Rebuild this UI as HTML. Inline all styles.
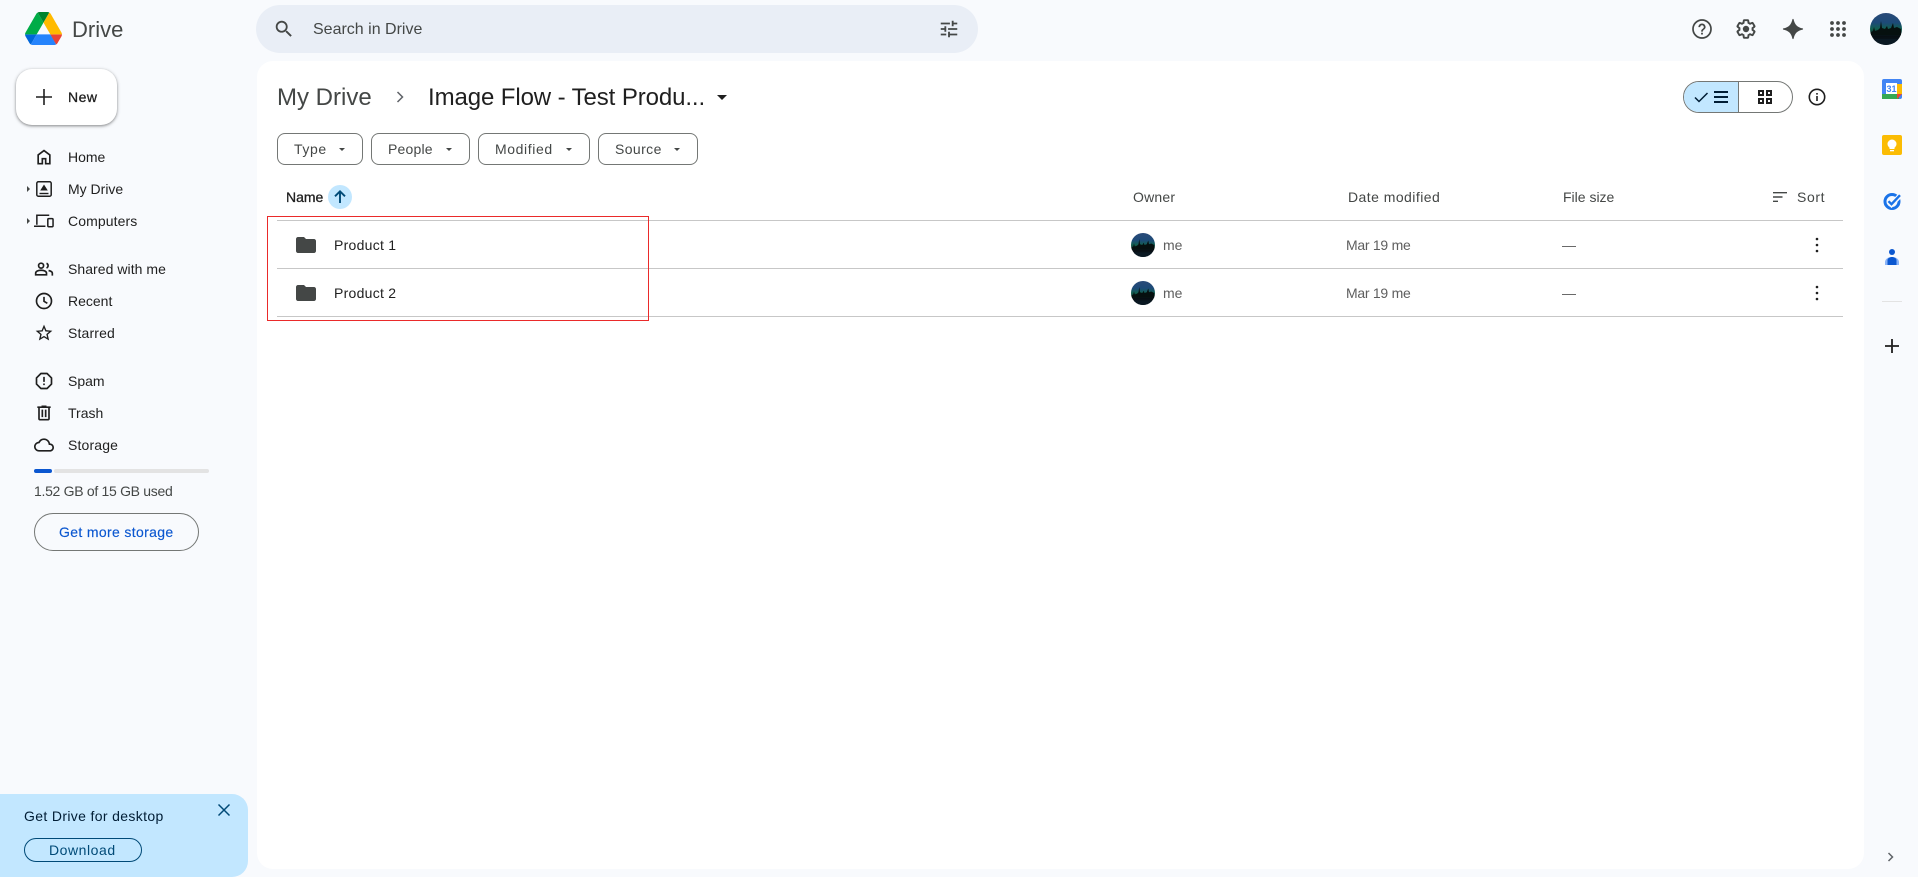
<!DOCTYPE html>
<html lang="en"><head><meta charset="utf-8"><title>Image Flow - Test Product - Google Drive</title>
<style>
html,body{margin:0;padding:0;width:1918px;height:877px;overflow:hidden;background:#f8fafd;font-family:"Liberation Sans",sans-serif;color:#1f1f1f}
.a{position:absolute}
.t{position:absolute;white-space:nowrap;font-size:14px;line-height:20px;height:20px}
.n{color:#1f1f1f;left:68px}
.m{-webkit-text-stroke:.3px currentColor}
svg{position:absolute;display:block;overflow:visible}
.chip{position:absolute;top:133px;height:30px;border:1px solid #747775;border-radius:8px;box-sizing:content-box}
.chip span{position:absolute;left:16px;top:5px;font-size:14px;line-height:20px;color:#444746;white-space:nowrap}
.chip i{position:absolute;top:14px;width:0;height:0;border:3.5px solid transparent;border-top:3.5px solid #444746;border-bottom:0}
.line{position:absolute;left:277px;width:1566px;height:1px;background:#c7c7c7}
.g{color:#5e5e5e}
.d{letter-spacing:-.27px}
</style></head><body>
<svg width="0" height="0" style="position:absolute"><defs>
<linearGradient id="sky" x1="0" y1="0" x2="0" y2="1"><stop offset="0" stop-color="#2a4a78"/><stop offset=".3" stop-color="#1d4a78"/><stop offset=".5" stop-color="#12604f"/><stop offset=".62" stop-color="#0a2a28"/><stop offset=".72" stop-color="#070d12"/><stop offset="1" stop-color="#0c1c26"/></linearGradient>
<clipPath id="cc"><circle cx="16" cy="16" r="16"/></clipPath>
<symbol id="av" viewBox="0 0 32 32"><g clip-path="url(#cc)"><rect width="32" height="32" fill="url(#sky)"/><path d="M0 20l3-2 1-4 1 4 3-1 2-2 1-7 1 7 3 1 2-3 1 3 3-1 2-5 1 5 3-1 4 2v6H0z" fill="#06100f"/><rect y="26" width="32" height="6" fill="#0a1822"/></g></symbol>
</defs></svg>

<!-- logo -->
<svg style="left:25px;top:12px" width="37" height="33" viewBox="0 0 87.3 78"><path d="m6.6 66.85 3.85 6.65c.8 1.4 1.95 2.5 3.3 3.3l13.75-23.8h-27.5c0 1.55.4 3.1 1.2 4.5z" fill="#0066da"/><path d="m43.65 25-13.75-23.8c-1.35.8-2.5 1.9-3.3 3.3l-25.4 44a9.06 9.06 0 0 0 -1.2 4.5h27.5z" fill="#00ac47"/><path d="m73.55 76.8c1.35-.8 2.5-1.9 3.3-3.3l1.6-2.75 7.65-13.25c.8-1.4 1.2-2.95 1.2-4.5h-27.502l5.852 11.5z" fill="#ea4335"/><path d="m43.65 25 13.75-23.8c-1.35-.8-2.9-1.2-4.5-1.2h-18.5c-1.6 0-3.15.45-4.5 1.2z" fill="#00832d"/><path d="m59.8 53h-32.3l-13.75 23.8c1.35.8 2.9 1.2 4.5 1.2h50.8c1.6 0 3.15-.45 4.5-1.2z" fill="#2684fc"/><path d="m73.4 26.5-12.7-22c-.8-1.4-1.95-2.5-3.3-3.3l-13.75 23.8 16.15 28h27.45c0-1.55-.4-3.1-1.2-4.5z" fill="#ffba00"/></svg>
<div class="t" style="left:72px;top:15px;height:30px;line-height:30px;font-size:22px;color:#444746">Drive</div>

<!-- search -->
<div class="a" style="left:256px;top:5px;width:722px;height:48px;border-radius:24px;background:#e9eef6"></div>
<svg style="left:273px;top:18px" width="22" height="22" viewBox="0 0 24 24" fill="#444746"><path d="M15.5 14h-.79l-.28-.27C15.41 12.59 16 11.11 16 9.5 16 5.91 13.09 3 9.5 3S3 5.91 3 9.5 5.91 16 9.5 16c1.61 0 3.09-.59 4.23-1.57l.27.28v.79l5 4.99L20.49 19l-4.99-5zm-6 0C7.01 14 5 11.99 5 9.5S7.01 5 9.5 5 14 7.01 14 9.5 11.99 14 9.5 14z"/></svg>
<div class="t" style="left:313px;top:20px;font-size:16px;color:#444746">Search in Drive</div>
<svg style="left:938px;top:18px" width="22" height="22" viewBox="0 0 24 24" fill="#444746"><path d="M3 17v2h6v-2H3zM3 5v2h10V5H3zm10 16v-2h8v-2h-8v-2h-2v6h2zM7 9v2H3v2h4v2h2V9H7zm14 4v-2H11v2h10zm-6-4h2V7h4V5h-4V3h-2v6z"/></svg>

<!-- top right -->
<svg style="left:1690px;top:17px" width="24" height="24" viewBox="0 0 24 24" fill="#444746"><circle cx="12" cy="12" r="9" fill="none" stroke="#444746" stroke-width="1.7"/><path d="M11.1 17.5h1.8v-1.8h-1.8zM12 6.5c-2 0-3.6 1.6-3.6 3.6h1.8c0-1 .8-1.8 1.8-1.8s1.8.8 1.8 1.8c0 1.8-2.7 1.6-2.7 4.5h1.8c0-2 2.7-2.3 2.7-4.5 0-2-1.6-3.6-3.6-3.6z"/></svg>
<svg style="left:1734px;top:17px" width="24" height="24" viewBox="0 0 24 24"><g transform="translate(12 12) scale(.88) translate(-12 -12)"><path fill="none" stroke="#444746" stroke-width="2.2" d="M19.43 12.98c.04-.32.07-.64.07-.98s-.03-.66-.07-.98l2.11-1.65c.19-.15.24-.42.12-.64l-2-3.46c-.12-.22-.39-.3-.61-.22l-2.49 1c-.52-.4-1.08-.73-1.69-.98l-.38-2.65C14.46 2.18 14.25 2 14 2h-4c-.25 0-.46.18-.49.42l-.38 2.65c-.61.25-1.17.59-1.69.98l-2.49-1c-.23-.09-.49 0-.61.22l-2 3.46c-.13.22-.07.49.12.64l2.11 1.65c-.04.32-.07.65-.07.98s.03.66.07.98l-2.11 1.65c-.19.15-.24.42-.12.64l2 3.46c.12.22.39.3.61.22l2.49-1c.52.4 1.08.73 1.69.98l.38 2.65c.03.24.24.42.49.42h4c.25 0 .46-.18.49-.42l.38-2.65c.61-.25 1.17-.59 1.69-.98l2.49 1c.23.09.49 0 .61-.22l2-3.46c.12-.22.07-.49-.12-.64z"/></g><circle cx="12" cy="12" r="3.2" fill="#444746"/></svg>
<svg style="left:1781px;top:17px" width="24" height="24" viewBox="0 0 24 24"><path fill="#444746" d="M12 2.5C13.2 8 16 10.8 21.5 12 16 13.2 13.2 16 12 21.5 10.8 16 8 13.2 2.5 12 8 10.8 10.8 8 12 2.5z" stroke="#444746" stroke-width="1.2" stroke-linejoin="round"/></svg>
<svg style="left:1826px;top:17px" width="24" height="24" viewBox="0 0 24 24" fill="#444746"><circle cx="6" cy="6" r="1.9"/><circle cx="12" cy="6" r="1.9"/><circle cx="18" cy="6" r="1.9"/><circle cx="6" cy="12" r="1.9"/><circle cx="12" cy="12" r="1.9"/><circle cx="18" cy="12" r="1.9"/><circle cx="6" cy="18" r="1.9"/><circle cx="12" cy="18" r="1.9"/><circle cx="18" cy="18" r="1.9"/></svg>
<svg style="left:1870px;top:13px" width="32" height="32"><use href="#av"/></svg>

<!-- new button -->
<div class="a" style="left:16px;top:69px;width:101px;height:56px;border-radius:16px;background:#fff;box-shadow:0 1px 2px rgba(0,0,0,.3),0 1px 3px 1px rgba(0,0,0,.15)"></div>
<svg style="left:32px;top:85px" width="24" height="24" viewBox="0 0 24 24"><path d="M12 4v16M4 12h16" stroke="#1f1f1f" stroke-width="1.6" fill="none"/></svg>
<div class="t m" style="left:68px;top:87px;letter-spacing:.5px">New</div>

<!-- nav -->
<svg style="left:34px;top:147px" width="20" height="20" viewBox="0 0 24 24" fill="#1f1f1f"><path d="M6 19h3v-6h6v6h3v-9l-6-4.5L6 10v9zm-2 2V9l8-6 8 6v12h-7v-6h-2v6H4z"/></svg>
<div class="t n" style="top:147px">Home</div>
<svg style="left:25px;top:186px" width="6" height="6" viewBox="0 0 6 6"><path d="M2 0l3 3-3 3z" fill="#444746"/></svg>
<svg style="left:36px;top:181px" width="16" height="16" viewBox="0 0 16 16"><rect x=".8" y=".8" width="14.4" height="14.4" rx="1.5" fill="none" stroke="#1f1f1f" stroke-width="1.5"/><path d="M8 3.5l3.8 6H4.2z" fill="#1f1f1f"/><path d="M3.5 12.5h9" stroke="#1f1f1f" stroke-width="1.4"/></svg>
<div class="t n" style="top:179px">My Drive</div>
<svg style="left:25px;top:218px" width="6" height="6" viewBox="0 0 6 6"><path d="M2 0l3 3-3 3z" fill="#444746"/></svg>
<svg style="left:34px;top:214px" width="20" height="14" viewBox="0 0 21 14" fill="none" stroke="#1f1f1f" stroke-width="1.6"><path d="M3 11V1h13M0 12.5h12"/><rect x="14.5" y="4.5" width="5.5" height="8.5" rx="1"/></svg>
<div class="t n" style="top:211px;letter-spacing:.1px">Computers</div>
<svg style="left:34px;top:259px" width="20" height="20" viewBox="0 0 24 24" fill="none" stroke="#1f1f1f" stroke-width="2"><circle cx="8.5" cy="8" r="3"/><path d="M2 19v-2c0-2.200 3-3.500 6.500-3.500S15 14.800 15 17v2z"/><path d="M15 5.200a3 3 0 0 1 0 5.600M17.500 13.800c2.200.5 4.500 1.500 4.500 3.200v3"/></svg>
<div class="t n" style="top:259px;letter-spacing:.05px">Shared with me</div>
<svg style="left:34px;top:291px" width="20" height="20" viewBox="0 0 24 24" fill="none" stroke="#1f1f1f" stroke-width="2"><circle cx="12" cy="12" r="9"/><path d="M12 7v5.400l4 2.400"/></svg>
<div class="t n" style="top:291px">Recent</div>
<svg style="left:34px;top:323px" width="20" height="20" viewBox="0 0 24 24" fill="#1f1f1f"><path d="M22 9.240l-7.190-.62L12 2 9.190 8.630 2 9.240l5.460 4.730L5.820 21 12 17.270 18.180 21l-1.630-7.030L22 9.240zM12 15.400l-3.760 2.270 1-4.280-3.320-2.880 4.380-.38L12 6.100l1.710 4.040 4.380.38-3.320 2.880 1 4.280L12 15.400z"/></svg>
<div class="t n" style="top:323px;letter-spacing:.15px">Starred</div>
<svg style="left:34px;top:371px" width="20" height="20" viewBox="0 0 24 24"><path d="M8.3 3h7.4L21 8.3v7.4L15.7 21H8.3L3 15.7V8.3z" fill="none" stroke="#1f1f1f" stroke-width="2" stroke-linejoin="round"/><path d="M11 7h2v6h-2zM11 15h2v2h-2z" fill="#1f1f1f"/></svg>
<div class="t n" style="top:371px">Spam</div>
<svg style="left:34px;top:403px" width="20" height="20" viewBox="0 0 24 24" fill="#1f1f1f"><path d="M15 4V3H9v1H4v2h1v13c0 1.1.9 2 2 2h10c1.1 0 2-.9 2-2V6h1V4h-5zm2 15H7V6h10v13zM9 8h2v9H9zm4 0h2v9h-2z"/></svg>
<div class="t n" style="top:403px">Trash</div>
<svg style="left:34px;top:435px" width="20" height="20" viewBox="0 0 24 24" fill="#1f1f1f"><path d="M12 6c2.620 0 4.880 1.860 5.390 4.430l.3 1.500 1.530.11c1.560.1 2.780 1.410 2.780 2.960 0 1.650-1.350 3-3 3H6c-2.210 0-4-1.790-4-4 0-2.050 1.530-3.760 3.560-3.970l1.070-.11.5-.95C8.080 7.140 9.940 6 12 6m0-2C9.110 4 6.600 5.640 5.350 8.040 2.340 8.360 0 10.910 0 14c0 3.310 2.690 6 6 6h13c2.760 0 5-2.240 5-5 0-2.640-2.050-4.780-4.650-4.960C18.670 6.590 15.640 4 12 4z"/></svg>
<div class="t n" style="top:435px;letter-spacing:.15px">Storage</div>
<div class="a" style="left:34px;top:469px;width:18px;height:4px;border-radius:2px;background:#0b57d0"></div>
<div class="a" style="left:54px;top:469px;width:155px;height:4px;border-radius:2px;background:#e3e3e3"></div>
<div class="t" style="left:34px;top:481px;color:#444746;letter-spacing:-.3px">1.52 GB of 15 GB used</div>
<div class="a" style="left:34px;top:513px;width:163px;height:36px;border:1px solid #747775;border-radius:19px"></div>
<div class="t m" style="left:59px;top:522px;color:#0b57d0;letter-spacing:.35px;-webkit-text-stroke-width:.15px">Get more storage</div>

<!-- banner -->
<div class="a" style="left:0;top:794px;width:248px;height:83px;border-radius:0 16px 16px 0;background:#c2e7ff"></div>
<div class="t" style="left:24px;top:806px;color:#001d35;letter-spacing:.35px">Get Drive for desktop</div>
<svg style="left:216px;top:802px" width="16" height="16" viewBox="0 0 16 16"><path d="M2.500 2.500l11 11M13.500 2.500l-11 11" stroke="#004a77" stroke-width="1.500"/></svg>
<div class="a" style="left:24px;top:838px;width:116px;height:22px;border:1px solid #004a77;border-radius:12px"></div>
<div class="t" style="left:49px;top:840px;color:#004a77;letter-spacing:.55px">Download</div>

<!-- main card -->
<div class="a" style="left:257px;top:61px;width:1607px;height:808px;background:#fff;border-radius:16px"></div>

<div class="t" style="left:277px;top:83px;height:30px;line-height:30px;font-size:24px;color:#444746">My Drive</div>
<svg style="left:388px;top:85px" width="24" height="24" viewBox="0 0 24 24"><path d="M9.500 7L14.500 12l-5 5" fill="none" stroke="#5f6368" stroke-width="1.500"/></svg>
<div class="t" style="left:428px;top:83px;height:30px;line-height:30px;font-size:24px;color:#1f1f1f;letter-spacing:-.1px">Image Flow - Test Produ...</div>
<div class="a" style="left:717px;top:95px;width:0;height:0;border:5px solid transparent;border-top:5px solid #1f1f1f;border-bottom:0"></div>

<!-- view toggle -->
<div class="a" style="left:1683px;top:81px;width:108px;height:30px;border:1px solid #747775;border-radius:16px;overflow:hidden"><div style="position:absolute;left:0;top:0;width:54px;height:30px;background:#c2e7ff;border-right:1px solid #747775"></div></div>
<svg style="left:1693px;top:89px" width="40" height="16" viewBox="0 0 40 16" fill="none" stroke="#001d35"><path d="M2 8.500l4 4L14.500 4" stroke-width="1.500"/><path d="M21 3h14M21 8h14M21 13h14" stroke-width="2"/></svg>
<svg style="left:1758px;top:90px" width="14" height="14" viewBox="0 0 14 14" fill="none" stroke="#1f1f1f" stroke-width="2"><rect x="1" y="1" width="4" height="4"/><rect x="9" y="1" width="4" height="4"/><rect x="1" y="9" width="4" height="4"/><rect x="9" y="9" width="4" height="4"/></svg>
<svg style="left:1805px;top:85px" width="24" height="24" viewBox="0 0 24 24"><circle cx="12" cy="12" r="7.700" fill="none" stroke="#1f1f1f" stroke-width="1.600"/><path d="M11.200 11h1.600v5h-1.600zM11.200 8h1.600v1.600h-1.600z" fill="#1f1f1f"/></svg>

<!-- chips -->
<div class="chip" style="left:277px;width:84px"><span style="letter-spacing:.6px">Type</span><i style="left:61px"></i></div>
<div class="chip" style="left:371px;width:97px"><span style="letter-spacing:.2px">People</span><i style="left:74px"></i></div>
<div class="chip" style="left:478px;width:110px"><span style="letter-spacing:.6px">Modified</span><i style="left:87px"></i></div>
<div class="chip" style="left:598px;width:98px"><span style="letter-spacing:.4px">Source</span><i style="left:75px"></i></div>

<!-- table header -->
<div class="t m" style="left:286px;top:187px">Name</div>
<div class="a" style="left:328px;top:185px;width:24px;height:24px;border-radius:50%;background:#c2e7ff"></div>
<svg style="left:331px;top:188px" width="18" height="18" viewBox="0 0 18 18"><path d="M9 15V3.500M4 8.300L9 3.300l5 5" fill="none" stroke="#004a77" stroke-width="1.900"/></svg>
<div class="t" style="left:1133px;top:187px;color:#444746;letter-spacing:.2px">Owner</div>
<div class="t" style="left:1348px;top:187px;color:#444746;letter-spacing:.45px">Date modified</div>
<div class="t" style="left:1563px;top:187px;color:#444746">File size</div>
<svg style="left:1772px;top:189px" width="16" height="16" viewBox="0 0 16 16" fill="#444746"><path d="M1 3h14v1.400H1zM1 7.300h9.500v1.400H1zM1 11.600h5V13H1z"/></svg>
<div class="t" style="left:1797px;top:187px;color:#444746;letter-spacing:.6px">Sort</div>
<div class="line" style="top:220px"></div>
<div class="line" style="top:268px"></div>
<div class="line" style="top:316px"></div>

<!-- row 1 -->
<svg style="left:294px;top:233px" width="24" height="24" viewBox="0 0 24 24"><path fill="#444746" d="M10 4H4c-1.100 0-2 .9-2 2v12c0 1.100.9 2 2 2h16c1.100 0 2-.9 2-2V8c0-1.100-.9-2-2-2h-8l-2-2z"/></svg>
<div class="t" style="left:334px;top:235px;letter-spacing:.27px">Product 1</div>
<svg style="left:1131px;top:233px" width="24" height="24"><use href="#av" width="24" height="24"/></svg>
<div class="t g" style="left:1163px;top:235px">me</div>
<div class="t g d" style="left:1346px;top:235px">Mar 19 me</div>
<div class="t g" style="left:1562px;top:235px">—</div>
<svg style="left:1807px;top:235px" width="20" height="20" viewBox="0 0 20 20" fill="#1f1f1f"><circle cx="10" cy="4" r="1.300"/><circle cx="10" cy="10" r="1.300"/><circle cx="10" cy="16" r="1.300"/></svg>

<!-- row 2 -->
<svg style="left:294px;top:281px" width="24" height="24" viewBox="0 0 24 24"><path fill="#444746" d="M10 4H4c-1.100 0-2 .9-2 2v12c0 1.100.9 2 2 2h16c1.100 0 2-.9 2-2V8c0-1.100-.9-2-2-2h-8l-2-2z"/></svg>
<div class="t" style="left:334px;top:283px;letter-spacing:.27px">Product 2</div>
<svg style="left:1131px;top:281px" width="24" height="24"><use href="#av" width="24" height="24"/></svg>
<div class="t g" style="left:1163px;top:283px">me</div>
<div class="t g d" style="left:1346px;top:283px">Mar 19 me</div>
<div class="t g" style="left:1562px;top:283px">—</div>
<svg style="left:1807px;top:283px" width="20" height="20" viewBox="0 0 20 20" fill="#1f1f1f"><circle cx="10" cy="4" r="1.300"/><circle cx="10" cy="10" r="1.300"/><circle cx="10" cy="16" r="1.300"/></svg>

<!-- red annotation -->
<div class="a" style="left:267px;top:216px;width:380px;height:103px;border:1.500px solid #ea2a2a"></div>

<!-- side panel -->
<svg style="left:1882px;top:79px" width="20" height="20" viewBox="0 0 20 20"><rect width="20" height="20" rx="2" fill="#4285f4"/><rect y="15" width="17" height="5" fill="#34a853"/><path d="M15 15h5V5h-5z" fill="#fbbc04"/><path d="M15 20l5-5h-5z" fill="#ea4335"/><rect x="4" y="4" width="11" height="11" fill="#fff"/><text x="9.500" y="13" font-size="9" font-family="Liberation Sans,sans-serif" font-weight="700" text-anchor="middle" fill="#4285f4">31</text></svg>
<svg style="left:1882px;top:135px" width="20" height="20" viewBox="0 0 20 20"><rect width="20" height="20" rx="2" fill="#fbbc04"/><circle cx="10" cy="9" r="4.500" fill="#fff"/><rect x="7.500" y="12" width="5" height="2" fill="#fff"/><rect x="8" y="15" width="4" height="1.300" fill="#fff"/></svg>
<svg style="left:1882px;top:191px" width="20" height="20" viewBox="0 0 20 20" fill="none"><circle cx="10" cy="10.500" r="7" stroke="#1a73e8" stroke-width="3"/><path d="M6.500 10.500l3 3 9-9.500" stroke="#f8fafd" stroke-width="5"/><path d="M6.500 10.200l3 3 8.500-9" stroke="#1a73e8" stroke-width="2.400"/></svg>
<svg style="left:1882px;top:247px" width="20" height="20" viewBox="0 0 20 20"><circle cx="10" cy="5" r="3" fill="#0b57d0"/><path d="M3 18v-3c0-2.500 2.500-5 7-5s7 2.500 7 5v3z" fill="#8ab4f8"/><path d="M5.500 18v-5c0-1.700 2.500-3 4.500-3s4.500 1.300 4.500 3v5z" fill="#0b57d0"/></svg>
<div class="a" style="left:1882px;top:301px;width:20px;height:1px;background:#e3e3e3"></div>
<svg style="left:1882px;top:336px" width="20" height="20" viewBox="0 0 20 20"><path d="M10 3v14M3 10h14" stroke="#1f1f1f" stroke-width="1.800"/></svg>
<svg style="left:1885px;top:851px" width="12" height="12" viewBox="0 0 12 12"><path d="M3.500 2L7.500 6l-4 4" fill="none" stroke="#5f6368" stroke-width="1.500"/></svg>
</body></html>
